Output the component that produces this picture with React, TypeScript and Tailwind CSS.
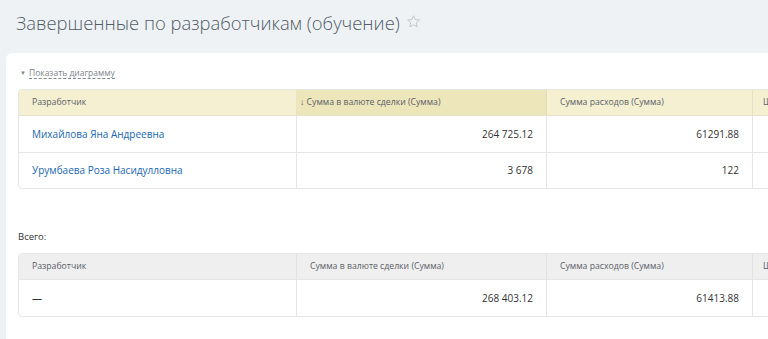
const font = { fontFamily: '"Open Sans", "Liberation Sans", sans-serif' };

interface Row {
  name: string;
  sum: string;
  cost: string;
}

const rows: Row[] = [
  { name: 'Михайлова Яна Андреевна', sum: '264 725.12', cost: '61291.88' },
  { name: 'Урумбаева Роза Насидулловна', sum: '3 678', cost: '122' },
];

function StarIcon() {
  return (
    <svg width="15" height="15" viewBox="0 0 24 24" fill="none" stroke="#c4c8cc" strokeWidth="1.6" strokeLinejoin="round">
      <path d="M12 2.8l2.8 6.1 6.6.7-4.9 4.5 1.4 6.6L12 17.3l-5.9 3.4 1.4-6.6-4.9-4.5 6.6-.7z" />
    </svg>
  );
}

export default function App() {
  return (
    <div className="w-[768px] h-[339px] bg-[#eef2f4] overflow-hidden" style={font}>
      <div className="h-[53px] pl-4 pt-[10px] flex items-start gap-[6px]">
        <h1 className="text-[18.4px] leading-[26px] text-[#535c69] font-light">Завершенные по разработчикам (обучение)</h1>
        <span className="mt-[4px]"><StarIcon /></span>
      </div>
      <div className="ml-[6px] w-[800px] h-[300px] bg-white rounded-tl-[6px] pl-3 pt-[13px]">
        <div className="flex items-center h-[14px] pl-[2px] text-[8.5px] text-[#80868e]">
          <span className="text-[6px] mr-[3px]">▼</span>
          <span className="border-b border-dashed border-[#80868e] leading-[11px]">Показать диаграмму</span>
        </div>

        <div className="mt-[9px] w-[760px] border border-[#e4e6e8] rounded-[4px] overflow-hidden">
          <div className="flex h-[26px] text-[8.7px] text-[#5b6068] bg-[#f5f0d2] border-b border-[#e6e2cc]">
            <div className="w-[278px] pl-[13px] flex items-center border-r border-[#e9e4c6]">Разработчик</div>
            <div className="w-[250px] pl-[3px] flex items-center bg-[#eee6bb] border-r border-[#e3dcb4]">↓ Сумма в валюте сделки (Сумма)</div>
            <div className="w-[206px] pl-[13px] flex items-center border-r border-[#e6e1c3]">Сумма расходов (Сумма)</div>
            <div className="flex-1 pl-[10px] flex items-center">Ш</div>
          </div>
          {rows.map((r, i) => (
            <div key={i} className={`flex h-[36px] text-[10px] ${i > 0 ? 'border-t border-[#e4e6e8]' : ''}`}>
              <div className="w-[278px] pl-[13px] flex items-center text-[#2067b0] border-r border-[#e4e6e8]">{r.name}</div>
              <div className="w-[250px] pr-[13px] flex items-center justify-end text-[#333] border-r border-[#e4e6e8]">{r.sum}</div>
              <div className="w-[206px] pr-[13px] flex items-center justify-end text-[#333] border-r border-[#e4e6e8]">{r.cost}</div>
              <div className="flex-1" />
            </div>
          ))}
        </div>

        <div className="mt-[41px] text-[9.5px] text-[#333] leading-[14px]">Всего:</div>

        <div className="mt-[9px] w-[760px] border border-[#e4e6e8] rounded-[4px] overflow-hidden">
          <div className="flex h-[26px] text-[8.7px] text-[#5b6068] bg-[#efefef] border-b border-[#e4e6e8]">
            <div className="w-[278px] pl-[13px] flex items-center border-r border-[#e2e2e2]">Разработчик</div>
            <div className="w-[250px] pl-[13px] flex items-center border-r border-[#e2e2e2]">Сумма в валюте сделки (Сумма)</div>
            <div className="w-[206px] pl-[13px] flex items-center border-r border-[#e2e2e2]">Сумма расходов (Сумма)</div>
            <div className="flex-1 pl-[10px] flex items-center">Ш</div>
          </div>
          <div className="flex h-[36px] text-[10px] text-[#333]">
            <div className="w-[278px] pl-[13px] flex items-center border-r border-[#e4e6e8]">—</div>
            <div className="w-[250px] pr-[13px] flex items-center justify-end border-r border-[#e4e6e8]">268 403.12</div>
            <div className="w-[206px] pr-[13px] flex items-center justify-end border-r border-[#e4e6e8]">61413.88</div>
            <div className="flex-1" />
          </div>
        </div>
      </div>
    </div>
  );
}
